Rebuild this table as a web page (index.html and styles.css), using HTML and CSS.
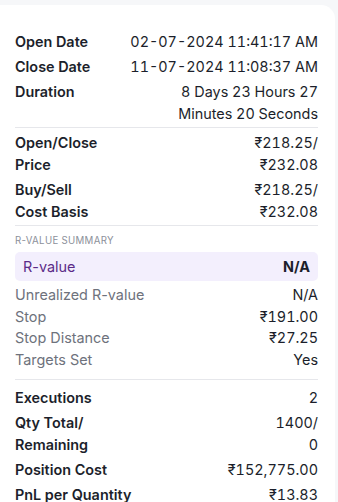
FILE: index.html
```html
<!DOCTYPE html>
<html lang="en">

<head>
    <meta charset="UTF-8">
    <meta name="viewport" content="width=device-width, initial-scale=1.0">
    <title>Trade Details</title>
    <link rel="stylesheet" href="styles.css">
</head>

<body>
    <div class="details-card">
        <div class="section section-dates">
            <div class="row"><span class="label">Open Date</span><span class="value">02-07-2024 11:41:17 AM</span></div>
            <div class="row"><span class="label">Close Date</span><span class="value">11-07-2024 11:08:37 AM</span></div>
            <div class="row"><span class="label">Duration</span><span class="value duration">8 Days 23 Hours 27 Minutes 20 Seconds</span></div>
        </div>

        <div class="section section-prices">
            <div class="row"><span class="label">Open/Close<br>Price</span><span class="value">₹218.25/<br>₹232.08</span></div>
            <div class="row"><span class="label">Buy/Sell<br>Cost Basis</span><span class="value">₹218.25/<br>₹232.08</span></div>
        </div>

        <div class="section section-r">
            <div class="section-title">R-VALUE SUMMARY</div>
            <div class="r-highlight">
                <span class="r-label">R-value</span>
                <span class="r-value">N/A</span>
            </div>
            <div class="row muted"><span class="label">Unrealized R-value</span><span class="value">N/A</span></div>
            <div class="row muted"><span class="label">Stop</span><span class="value">₹191.00</span></div>
            <div class="row muted"><span class="label">Stop Distance</span><span class="value">₹27.25</span></div>
            <div class="row muted"><span class="label">Targets Set</span><span class="value">Yes</span></div>
        </div>

        <div class="section section-qty">
            <div class="row"><span class="label">Executions</span><span class="value">2</span></div>
            <div class="row"><span class="label">Qty Total/<br>Remaining</span><span class="value">1400/<br>0</span></div>
            <div class="row"><span class="label">Position Cost</span><span class="value">₹152,775.00</span></div>
            <div class="row"><span class="label">PnL per Quantity</span><span class="value">₹13.83</span></div>
        </div>
    </div>
</body>
</html>
```

FILE: styles.css
```css
body {
    margin: 0;
    background-color: #f6f7f9;
    font-family: Inter, "Noto Sans", sans-serif;
    color: #1c1f2b;
}

.details-card {
    margin: 5px 3px 0 0;
    padding: 26px 17px 0 15px;
    background-color: #ffffff;
    border-top-right-radius: 14px;
}

.section {
    display: flex;
    flex-direction: column;
    gap: 3px;
    border-bottom: 1px solid #e6e7eb;
}

.section-dates {
    padding-bottom: 2px;
}

.section-prices {
    padding: 4px 0 2px;
}

.section-r {
    gap: 0;
    padding-bottom: 9px;
}

.section-qty {
    padding-top: 7px;
    border-bottom: none;
}

.row {
    display: flex;
    justify-content: space-between;
    font-size: 14.4px;
    line-height: 22px;
}

.label {
    font-weight: 600;
    white-space: nowrap;
}

.value {
    text-align: right;
    font-weight: 400;
    font-variant-numeric: tabular-nums;
}

.duration {
    max-width: 180px;
}

.section-title {
    margin: 9px 0 5px;
    font-size: 9.7px;
    line-height: 12px;
    letter-spacing: 0.3px;
    color: #8c909a;
}

.r-highlight {
    display: flex;
    justify-content: space-between;
    align-items: center;
    height: 29px;
    padding: 0 8px;
    margin-bottom: 3px;
    background-color: #f3effd;
    border-radius: 5px;
    font-size: 14.4px;
}

.r-label {
    color: #5b2b88;
}

.r-value {
    font-weight: 700;
}

.row.muted {
    line-height: 21.5px;
}

.row.muted .label {
    font-weight: 400;
    color: #6e727c;
}
```
